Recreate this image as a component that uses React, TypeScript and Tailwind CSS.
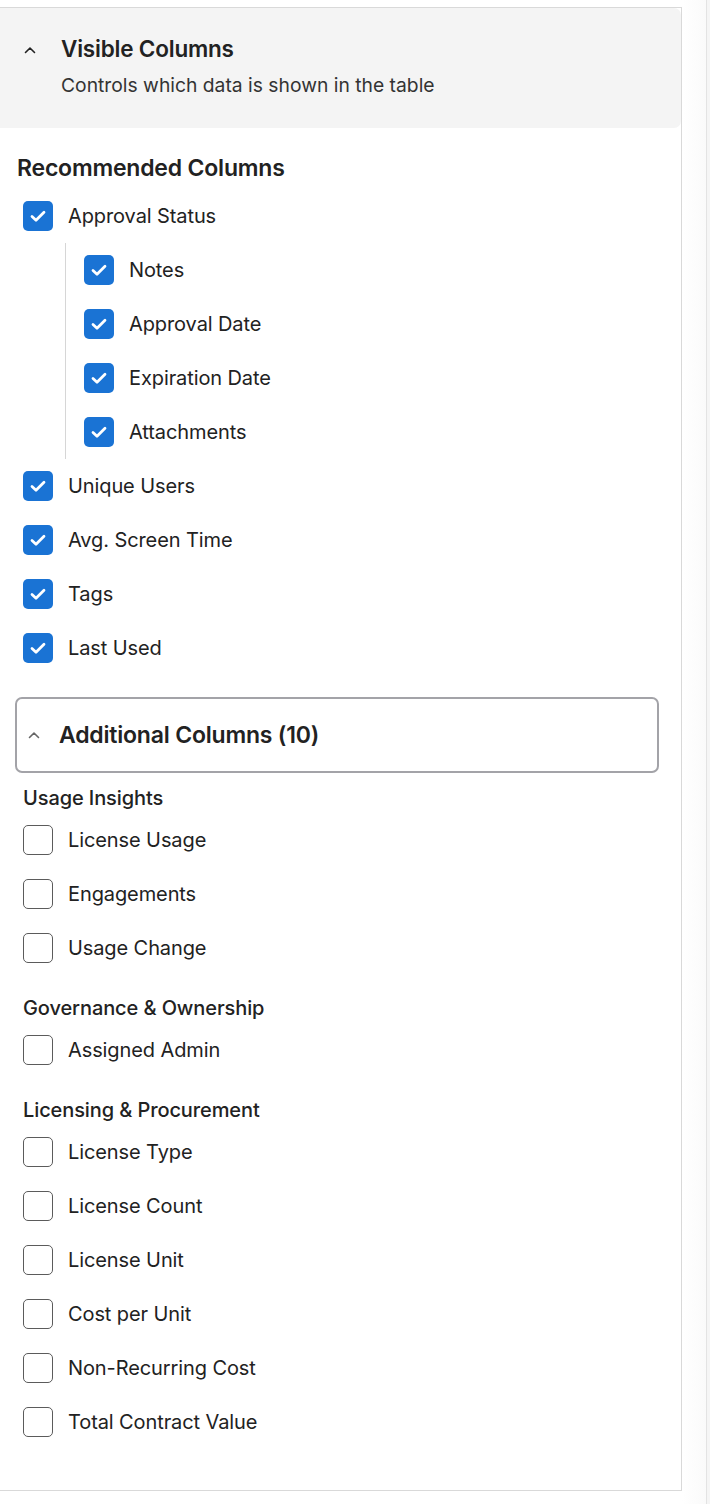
import React from "react";

const font = { fontFamily: "Inter, 'Noto Sans', sans-serif" };

const Chevron = ({ className }: { className?: string }) => (
  <svg viewBox="0 0 12 8" className={className} fill="none">
    <path d="M1.5 6.5 6 2l4.5 4.5" stroke="currentColor" strokeWidth="1.6" strokeLinecap="round" strokeLinejoin="round" />
  </svg>
);

const Box = ({ checked }: { checked: boolean }) =>
  checked ? (
    <div className="w-[30px] h-[30px] rounded-[5px] bg-[#1a73d4] flex items-center justify-center shrink-0">
      <svg viewBox="0 0 16 16" className="w-[20px] h-[20px]" fill="none">
        <path d="M3.2 8.4 6.4 11.4 12.8 5" stroke="white" strokeWidth="2.2" strokeLinecap="round" strokeLinejoin="round" />
      </svg>
    </div>
  ) : (
    <div className="w-[30px] h-[30px] rounded-[5px] border border-[#5b5b5b] bg-white shrink-0" />
  );

const Row = ({ label, checked }: { label: string; checked: boolean }) => (
  <div className="h-[54px] flex items-center gap-[15px]">
    <Box checked={checked} />
    <span className="text-[20px] text-[#222] tracking-[-0.1px]">{label}</span>
  </div>
);

const groups = [
  { title: "Usage Insights", items: ["License Usage", "Engagements", "Usage Change"] },
  { title: "Governance & Ownership", items: ["Assigned Admin"] },
  {
    title: "Licensing & Procurement",
    items: ["License Type", "License Count", "License Unit", "Cost per Unit", "Non-Recurring Cost", "Total Contract Value"],
  },
];

export default function App() {
  return (
    <div className="flex w-[710px] h-[1504px] bg-white" style={font}>
      <div className="w-[682px] shrink-0 pt-[7px]">
        <div className="h-[1484px] border-t border-r border-b border-[#d9d9d9]">
          <div className="h-[120px] bg-[#f4f4f4] rounded-r-[7px] flex flex-col justify-center pl-[61px] relative">
            <Chevron className="absolute left-[24px] top-[38px] w-[12px] h-[8px] text-[#222]" />
            <div className="text-[22.5px] font-semibold text-[#222] leading-[28px] -mt-[3px] tracking-[-0.2px]">Visible Columns</div>
            <div className="text-[19.3px] text-[#333] leading-[26px] mt-[9px]">Controls which data is shown in the table</div>
          </div>

          <div className="pl-[17px] pr-[22px]">
            <div className="mt-[26px] text-[23px] font-semibold text-[#222] leading-[28px] tracking-[-0.2px]">Recommended Columns</div>
            <div className="mt-[7px] pl-[6px]">
              <Row label="Approval Status" checked />
              <div className="ml-[42px] border-l border-[#d6d6d6] pl-[18px]">
                <Row label="Notes" checked />
                <Row label="Approval Date" checked />
                <Row label="Expiration Date" checked />
                <Row label="Attachments" checked />
              </div>
              <Row label="Unique Users" checked />
              <Row label="Avg. Screen Time" checked />
              <Row label="Tags" checked />
              <Row label="Last Used" checked />
            </div>

            <div className="mt-[22px] -ml-[2px] h-[76px] border-2 border-[#a3a3a8] rounded-[7px] flex items-center gap-[19px] pl-[11px]">
              <Chevron className="w-[12px] h-[8px] text-[#666]" />
              <span className="text-[23px] font-semibold text-[#222] tracking-[-0.2px]">Additional Columns (10)</span>
            </div>

            <div className="pl-[6px] pt-[1px]">
              {groups.map((g, i) => (
                <div key={g.title} className={i === 0 ? "mt-[12px]" : "mt-[21px]"}>
                  <div className="text-[20px] font-medium text-[#222] leading-[24px] mb-[3px] tracking-[-0.1px]">{g.title}</div>
                  {g.items.map((it) => (
                    <Row key={it} label={it} checked={false} />
                  ))}
                </div>
              ))}
            </div>
          </div>
        </div>
      </div>
      <div className="flex-1 bg-gradient-to-r from-white to-[#fafafa]" />
      <div className="w-[4px] border-l border-[#e3e3e3] bg-[#f5f5f5]" />
    </div>
  );
}
